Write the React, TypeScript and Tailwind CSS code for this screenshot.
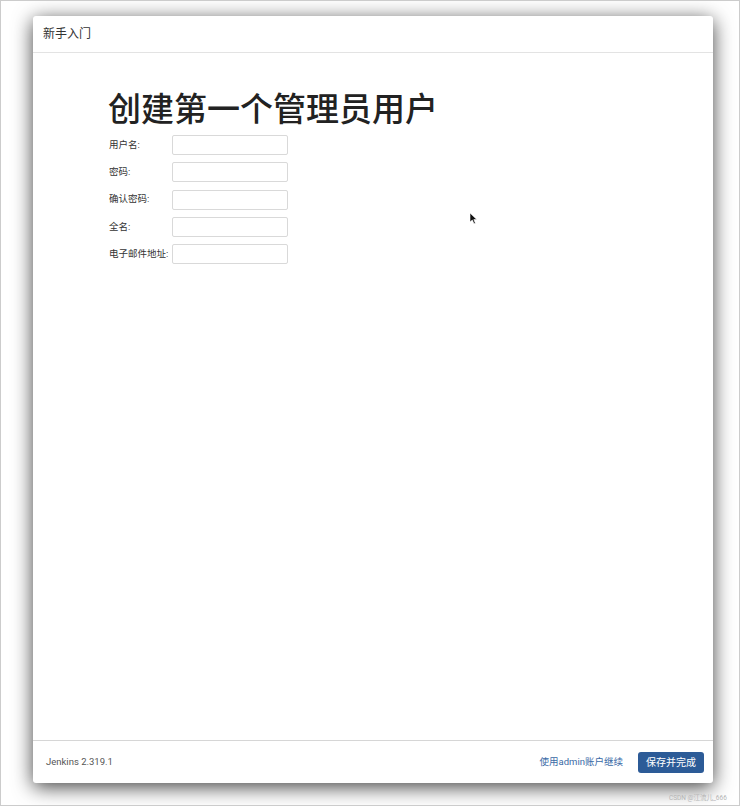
import React from "react";

const font = { fontFamily: 'Roboto, "Noto Sans CJK SC", sans-serif' };

const fields = ["用户名:", "密码:", "确认密码:", "全名:", "电子邮件地址:"];

export default function App() {
  return (
    <div
      className="relative w-[740px] h-[806px] border border-[#cccccc] bg-white overflow-hidden"
      style={font}
    >
      <div className="ml-[32px] mt-[15px] w-[680px] h-[767px] bg-white rounded-[3px] flex flex-col shadow-[0_4px_20px_rgba(0,0,0,0.75)]">
        <div className="h-[37px] border-b border-[#e3e3e3] flex items-center pl-[10px] text-[12px] text-[#333]">
          新手入门
        </div>
        <div className="flex-1 pl-[75px] pt-[37px]">
          <h1 className="text-[33px] leading-[40px] text-[#222] font-medium">创建第一个管理员用户</h1>
          <div className="mt-[5px] flex flex-col gap-[7.25px]">
            {fields.map((f) => (
              <div key={f} className="flex items-center h-[20px]">
                <div className="w-[64px] pl-[1px] text-[9.5px] text-[#333] whitespace-nowrap">{f}</div>
                <div className="w-[116px] h-[20px] border border-[#d9d9d9] rounded-[2px] bg-white" />
              </div>
            ))}
          </div>
        </div>
        <div className="h-[43px] border-t border-[#d6d6d6] flex items-center pl-[13px] pr-[9px]">
          <span className="text-[9.5px] text-[#555]">Jenkins 2.319.1</span>
          <span className="ml-auto text-[9.5px] text-[#3a6aa6]">使用admin账户继续</span>
          <button className="ml-[15px] w-[66px] h-[21px] rounded-[3px] bg-[#2c5b97] text-white text-[10px]">
            保存并完成
          </button>
        </div>
      </div>
      <svg className="absolute left-[468px] top-[211px]" width="9" height="13" viewBox="0 0 9 13">
        <path d="M1 1 L1 10 L3.3 8 L5 11.8 L6.4 11.2 L4.8 7.6 L7.8 7.6 Z" fill="#111" stroke="#fff" strokeWidth="0.6" />
      </svg>
      <div className="absolute left-[668px] top-[793px] text-[6.5px] text-[#b5b5b5] whitespace-nowrap">CSDN @江流儿_666</div>
    </div>
  );
}
